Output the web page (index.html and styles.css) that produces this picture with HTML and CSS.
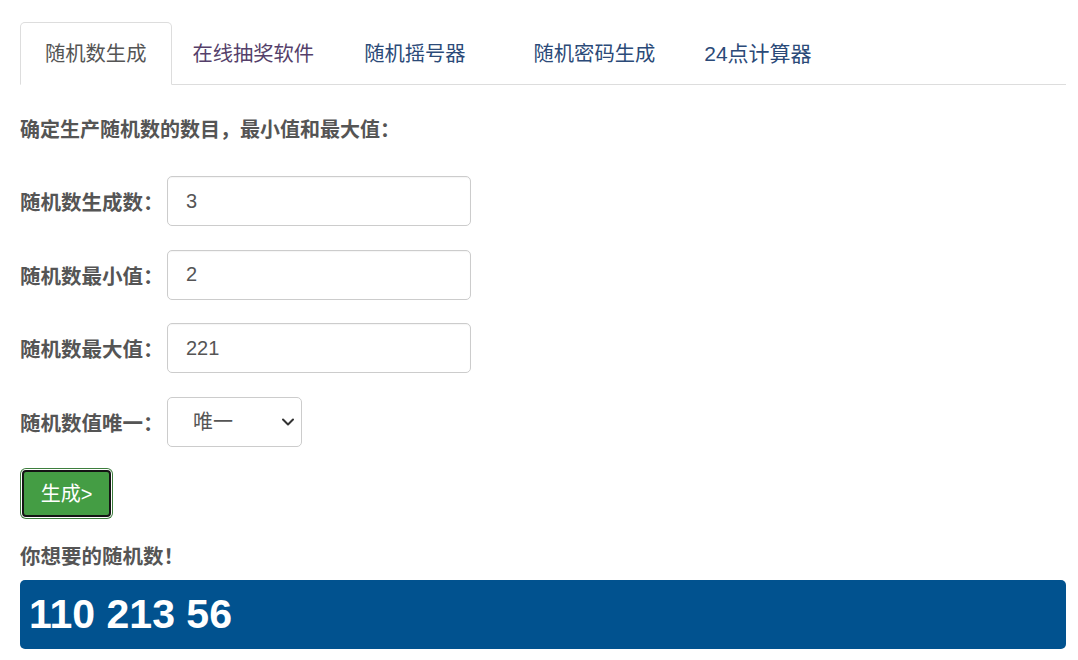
FILE: index.html
```html
<!DOCTYPE html>
<html lang="zh-CN">
<head>
<meta charset="utf-8">
<title>随机数生成</title>
<link rel="stylesheet" href="styles.css">
</head>
<body>
<div class="page">
  <ul class="tabs">
    <li class="tab tab-active"><a href="#">随机数生成</a></li>
    <li class="tab tab-visited"><a href="#">在线抽奖软件</a></li>
    <li class="tab tab-wide"><a href="#">随机摇号器</a></li>
    <li class="tab tab-narrow"><a href="#">随机密码生成</a></li>
    <li class="tab"><a href="#">24点计算器</a></li>
  </ul>

  <p class="intro">确定生产随机数的数目，最小值和最大值：</p>

  <form class="form">
    <div class="row">
      <label class="label">随机数生成数：</label>
      <input class="field" type="text" value="3">
    </div>
    <div class="row">
      <label class="label">随机数最小值：</label>
      <input class="field" type="text" value="2">
    </div>
    <div class="row">
      <label class="label">随机数最大值：</label>
      <input class="field" type="text" value="221">
    </div>
    <div class="row">
      <label class="label">随机数值唯一：</label>
      <div class="select-wrap">
        <select class="select">
          <option>唯一</option>
          <option>不唯一</option>
        </select>
        <svg class="chevron" width="14" height="10" viewBox="0 0 14 10"><path d="M2 2.5 L7 7.5 L12 2.5" fill="none" stroke="#333" stroke-width="2" stroke-linecap="round" stroke-linejoin="round"/></svg>
      </div>
    </div>
    <button class="btn" type="button">生成&gt;</button>
  </form>

  <p class="result-title">你想要的随机数！</p>
  <div class="result">110 213 56</div>
</div>
</body>
</html>
```

FILE: styles.css
```css
html, body {
  margin: 0;
  padding: 0;
  background: #fff;
}

body {
  font-family: "Liberation Sans", "Noto Sans CJK SC", sans-serif;
  color: #555;
}

.page {
  padding: 22px 12px 0 20px;
}

.tabs {
  list-style: none;
  margin: 0;
  padding: 0;
  display: flex;
  border-bottom: 1px solid #ddd;
}

.tab {
  margin-right: 2px;
  margin-bottom: -1px;
}

.tab a {
  display: block;
  font-size: 20.3px;
  line-height: 28px;
  padding: 17px 24px 16px;
  border: 1px solid transparent;
  border-radius: 5px 5px 0 0;
  text-decoration: none;
  color: #2b4a78;
}

.tab:first-child a {
  padding-right: 25px;
}

.tab-active a {
  color: #555;
  background: #fff;
  border-color: #ddd #ddd transparent;
}

.tab-visited a {
  color: #553f6a;
  padding-left: 17px;
  padding-right: 22px;
}

.tab-wide a {
  padding-right: 40px;
}

.tab-narrow a {
  padding-right: 21px;
}

.tab:last-child a {
  font-size: 21px;
}

.intro {
  margin: 33px 0 34px;
  font-size: 20px;
  line-height: 24px;
  font-weight: bold;
  color: #555;
}

.form {
  margin: 0;
}

.row {
  display: flex;
  align-items: center;
  height: 50px;
  margin-bottom: 23.5px;
}

.label {
  width: 147px;
  flex: none;
  font-size: 20.5px;
  font-weight: bold;
  color: #555;
}

.field {
  box-sizing: border-box;
  width: 304px;
  height: 50px;
  padding: 0 18px;
  border: 1px solid #ccc;
  border-radius: 5px;
  font-family: "Liberation Sans", "Noto Sans CJK SC", sans-serif;
  font-size: 20px;
  color: #555;
  background: #fff;
  box-shadow: inset 0 1px 1px rgba(0,0,0,0.04);
}

.select-wrap {
  position: relative;
  width: 135px;
  height: 50px;
}

.select {
  -webkit-appearance: none;
  appearance: none;
  box-sizing: border-box;
  width: 100%;
  height: 100%;
  padding: 0 0 0 25px;
  border: 1px solid #ccc;
  border-radius: 5px;
  background: #fff;
  font-family: "Liberation Sans", "Noto Sans CJK SC", sans-serif;
  font-size: 20px;
  color: #555;
}

.chevron {
  position: absolute;
  right: 7px;
  top: 20px;
  pointer-events: none;
}

.btn {
  display: block;
  box-sizing: border-box;
  width: 89px;
  height: 47px;
  margin: 22px 0 0 2px;
  padding: 0;
  border: 2px solid #141414;
  border-radius: 4px;
  background: #449d44;
  box-shadow: 0 0 0 1px #fff, 0 0 0 2px #3d7d3d;
  color: #fff;
  font-family: "Liberation Sans", "Noto Sans CJK SC", sans-serif;
  font-size: 20px;
  line-height: 22px;
}

.result-title {
  margin: 28px 0 11px;
  font-size: 20.5px;
  line-height: 24px;
  font-weight: bold;
  color: #555;
}

.result {
  background: #01528f;
  border-radius: 5px;
  height: 69px;
  line-height: 69px;
  padding-left: 9px;
  font-size: 41px;
  font-weight: bold;
  color: #fff;
}
```
